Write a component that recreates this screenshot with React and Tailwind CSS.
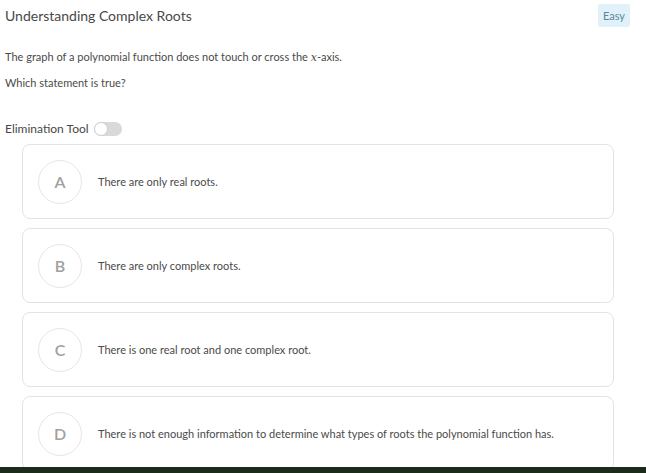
import React, { useState } from "react";

const options = [
  { letter: "A", text: "There are only real roots." },
  { letter: "B", text: "There are only complex roots." },
  { letter: "C", text: "There is one real root and one complex root." },
  { letter: "D", text: "There is not enough information to determine what types of roots the polynomial function has." },
];

const App = () => {
  const [eliminate, setEliminate] = useState(false);

  return (
    <div className="relative min-h-[473px] bg-white font-['Lato',sans-serif] text-[#4a4a4a]">
      {/* Header */}
      <div className="flex items-start justify-between pl-[5px] pr-[16px] pt-[4px]">
        <h1 className="mt-[3px] text-[14px] leading-[18px] text-[#484848]">Understanding Complex Roots</h1>
        <span className="rounded-[2px] bg-[#e1f1f9] px-[5px] py-[5px] text-[11px] leading-[13px] text-[#5b8797]">
          Easy
        </span>
      </div>

      {/* Question */}
      <div className="pl-[5px] pt-[23px] text-[11px] leading-[14px] text-[#4a4a4a]">
        <p>
          The graph of a polynomial function does not touch or cross the <i className="font-['DejaVu_Serif',serif]">x</i>-axis.
        </p>
        <p className="mt-[11px]">Which statement is true?</p>
      </div>

      {/* Elimination tool */}
      <div className="mt-[32px] flex items-center gap-[5px] pl-[5px]">
        <span className="text-[12px] leading-[14px] text-[#484848]">Elimination Tool</span>
        <button
          onClick={() => setEliminate(!eliminate)}
          className="relative h-[14px] w-[28px] rounded-full bg-[#d9d9d9]"
        >
          <span
            className={
              eliminate
                ? "absolute right-0 top-0 h-[14px] w-[14px] rounded-full border border-[#cfcfcf] bg-white"
                : "absolute left-0 top-0 h-[14px] w-[14px] rounded-full border border-[#cfcfcf] bg-white"
            }
          />
        </button>
      </div>

      {/* Options */}
      <div className="ml-[22px] mt-[8px] flex w-[592px] flex-col gap-[9px]">
        {options.map((opt) => (
          <div
            key={opt.letter}
            className="flex h-[75px] items-center gap-[16px] rounded-[8px] border border-[#e3e3e3] bg-white pl-[15px]"
          >
            <div className="flex h-[44px] w-[44px] shrink-0 items-center justify-center rounded-full border border-[#e6e6e6] text-[16px] font-semibold text-[#a0a0a0]">
              {opt.letter}
            </div>
            <span className="text-[11px] leading-[14px] text-[#4a4a4a]">{opt.text}</span>
          </div>
        ))}
      </div>

      {/* Footer strip */}
      <div className="fixed bottom-0 left-0 h-[6px] w-full bg-[#1c2b1c]" />
    </div>
  );
};

export default App;
